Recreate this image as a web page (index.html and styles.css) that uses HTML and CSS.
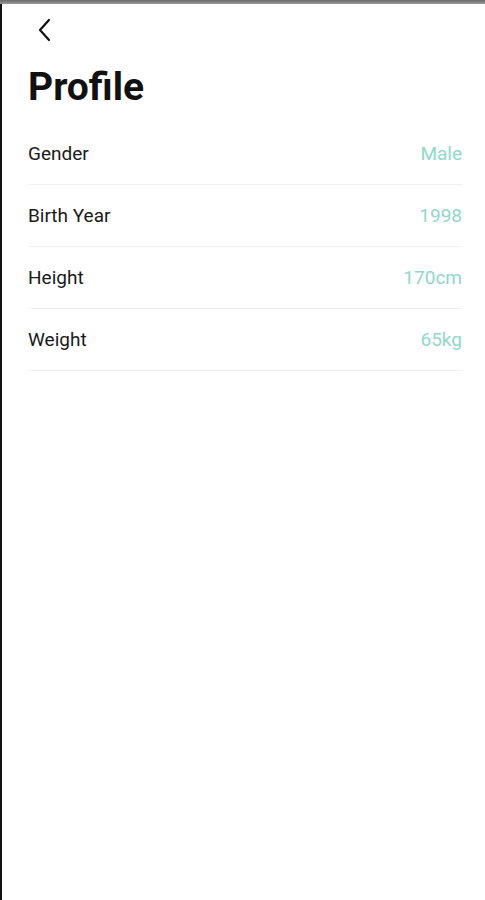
FILE: index.html
```html
<!DOCTYPE html>
<html>
<head>
  <meta charset="utf-8">
  <title>Profile</title>
  <link rel="stylesheet" href="styles.css">
</head>
<body>
  <div class="top-bar"></div>
  <div class="screen">
    <div class="nav">
      <svg class="back" width="16" height="24" viewBox="0 0 16 24">
        <path d="M12 2 L3 12 L12 22" fill="none" stroke="#111" stroke-width="2.2" stroke-linecap="round" stroke-linejoin="round"/>
      </svg>
    </div>
    <h1 class="title">Profile</h1>
    <ul class="rows">
      <li class="row"><span class="label">Gender</span><span class="value">Male</span></li>
      <li class="row"><span class="label">Birth Year</span><span class="value">1998</span></li>
      <li class="row"><span class="label">Height</span><span class="value">170cm</span></li>
      <li class="row"><span class="label">Weight</span><span class="value">65kg</span></li>
    </ul>
  </div>
</body>
</html>
```

FILE: styles.css
```css
html,
body {
  margin: 0;
  height: 100%;
  background: #ffffff;
  font-family: Roboto, "Noto Sans", sans-serif;
}

body {
  display: flex;
  flex-direction: column;
}

.top-bar {
  height: 4px;
  background: linear-gradient(#6a6a6a, #9a9a9a);
}

.screen {
  flex-grow: 1;
  border-left: 2px solid #111111;
  padding: 0 23px 0 26px;
}

.nav {
  height: 56px;
  display: flex;
  align-items: center;
  padding-left: 9px;
}

.back {
  display: block;
  margin-top: -4px;
}

.title {
  margin: 0;
  font-size: 39px;
  font-weight: bold;
  color: #111111;
  line-height: 54px;
}

.rows {
  list-style: none;
  margin: 9px 0 0 0;
  padding: 0;
}

.row {
  height: 61px;
  border-bottom: 1px solid #f0f0f0;
  display: flex;
  justify-content: space-between;
  align-items: center;
  font-size: 19px;
}

.label {
  color: #1a1a1a;
}

.value {
  color: #8fd8ca;
}
```
